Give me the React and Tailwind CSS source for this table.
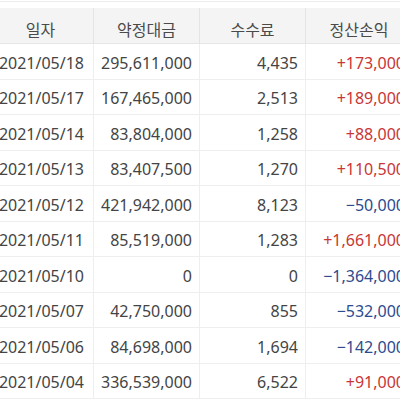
import React from "react";

const rows = [
  ["2021/05/18", "295,611,000", "4,435", "+173,000"],
  ["2021/05/17", "167,465,000", "2,513", "+189,000"],
  ["2021/05/14", "83,804,000", "1,258", "+88,000"],
  ["2021/05/13", "83,407,500", "1,270", "+110,500"],
  ["2021/05/12", "421,942,000", "8,123", "−50,000"],
  ["2021/05/11", "85,519,000", "1,283", "+1,661,000"],
  ["2021/05/10", "0", "0", "−1,364,000"],
  ["2021/05/07", "42,750,000", "855", "−532,000"],
  ["2021/05/06", "84,698,000", "1,694", "−142,000"],
  ["2021/05/04", "336,539,000", "6,522", "+91,000"],
];

export default function App() {
  return (
    <div
      className="w-[400px] h-[400px] overflow-hidden bg-white text-[#444]"
      style={{ fontFamily: '"Noto Sans", "Noto Sans CJK KR", sans-serif' }}
    >
      <div className="mt-px h-[7px] border-t border-[#ececec]" />
      <div className="-ml-[12px] w-[424px]">
        <div className="grid grid-cols-[106px_106px_106px_106px] h-[36px] bg-[#f4f4f4] border-b border-[#e6e6e6] text-[16px]">
          {["일자", "약정대금", "수수료", "정산손익"].map((h, i) => (
            <div
              key={h}
              className={
                "flex items-center justify-center pt-[8px] text-[#4a4a4a] " +
                (i < 3 ? "border-r border-[#e4e4e4]" : "")
              }
            >
              {h}
            </div>
          ))}
        </div>
        {rows.map((r, ri) => (
          <div
            key={ri}
            className="grid grid-cols-[106px_106px_106px_106px] h-[35.5px] border-b border-[#eeeeee] text-[16px]"
          >
            {r.map((c, i) => (
              <div
                key={i}
                className={
                  "flex items-center justify-end pt-[3px] " +
                  (i === 0 ? "pr-[9px] " : "pr-[7px] ") +
                  (i < 3 ? "border-r border-[#eeeeee] " : "") +
                  (i === 3
                    ? c.startsWith("+")
                      ? "text-[#c93636]"
                      : "text-[#2d4b8e]"
                    : "")
                }
              >
                {c}
              </div>
            ))}
          </div>
        ))}
      </div>
    </div>
  );
}
